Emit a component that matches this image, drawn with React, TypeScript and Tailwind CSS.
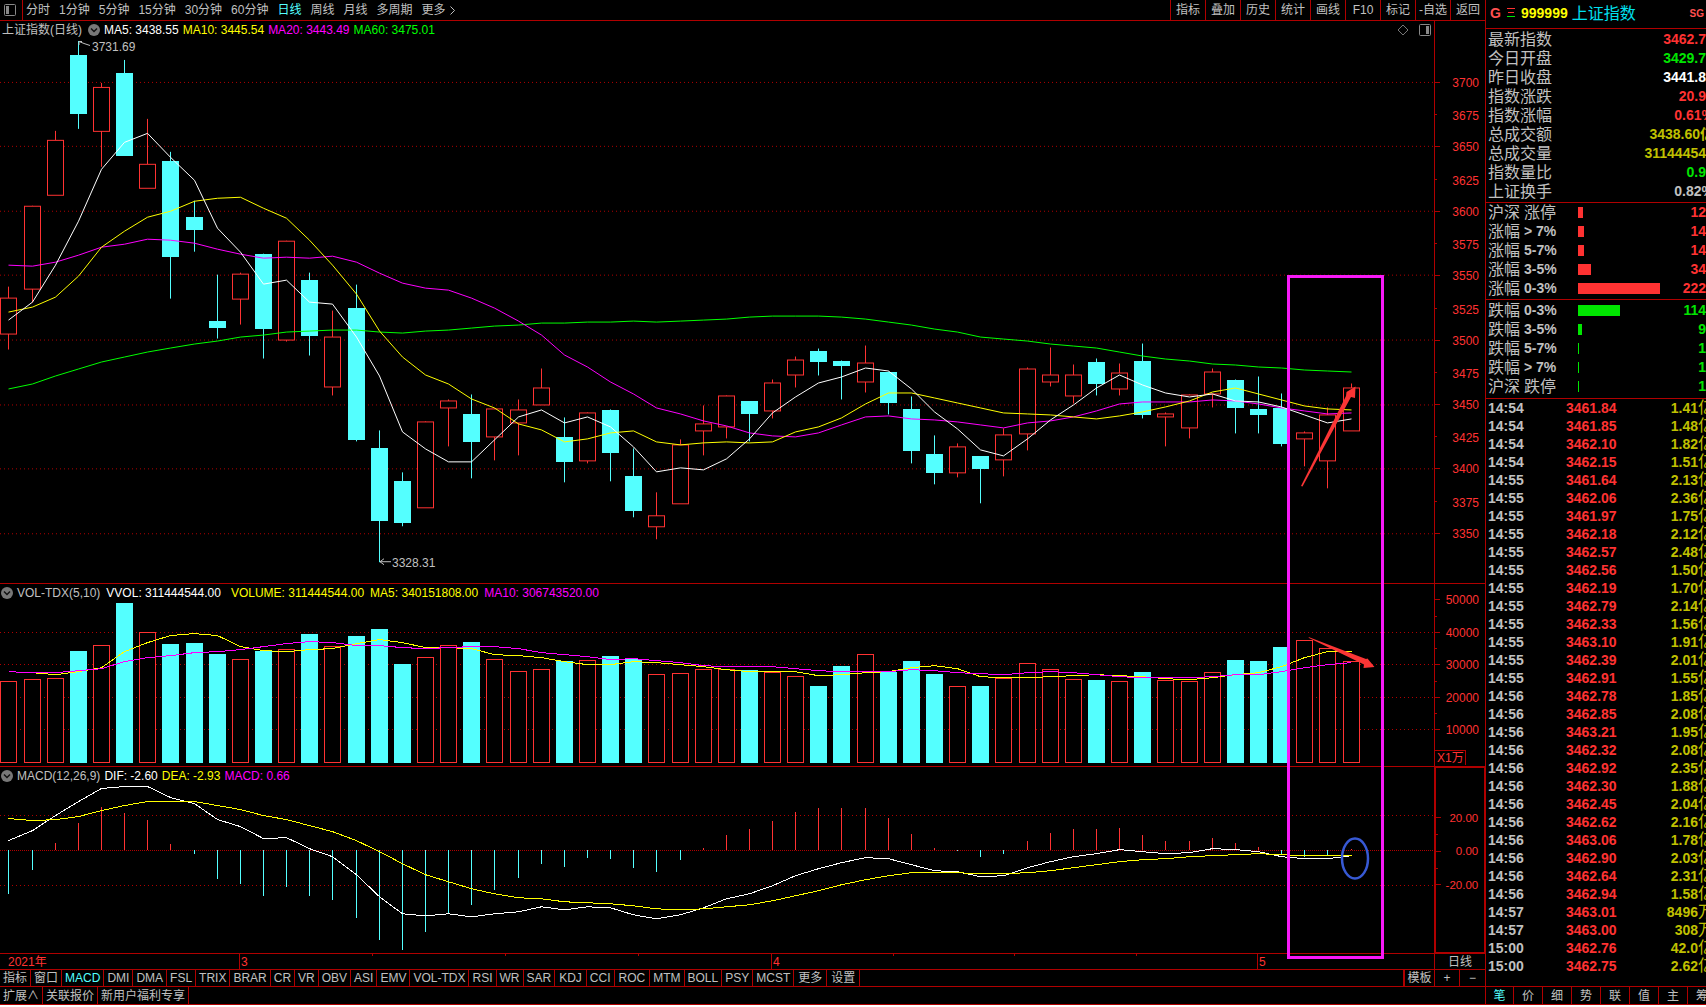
import { clsx } from "clsx";
import type { ReactNode } from "react";

type Candle = [up: 0 | 1, top: number, bottom: number, high: number, low: number];

const RED = "#ff3232";
const CYAN = "#54ffff";
const LINE = "#b00000";

// 1 = 阳线, 0 = 阴线; chart coordinates
const CANDLES: Candle[] = [
  [1, 298, 334, 287, 350], [1, 206, 289, 206, 303], [1, 140, 195, 131, 195], [0, 55, 114, 41, 129],
  [1, 87, 131, 83, 167], [0, 73, 156, 60, 156], [1, 164, 188, 119, 188], [0, 161, 257, 152, 299],
  [0, 217, 230, 201, 252], [0, 321, 328, 275, 339], [1, 274, 299, 273, 325], [0, 254, 329, 254, 359],
  [1, 241, 340, 241, 342], [0, 280, 336, 273, 356], [1, 337, 387, 311, 396], [0, 308, 441, 285, 442],
  [0, 449, 522, 431, 563], [0, 482, 524, 473, 527], [1, 422, 508, 422, 508], [1, 401, 408, 400, 447],
  [0, 415, 443, 395, 479], [1, 409, 437, 409, 461], [1, 410, 423, 400, 456], [1, 388, 405, 369, 405],
  [0, 438, 463, 418, 483], [1, 413, 461, 413, 464], [0, 411, 454, 410, 482], [0, 477, 512, 449, 518],
  [1, 516, 527, 493, 540], [1, 445, 504, 440, 504], [1, 424, 431, 406, 456], [1, 396, 427, 396, 439],
  [0, 402, 415, 402, 442], [1, 383, 411, 380, 419], [1, 360, 375, 357, 388], [0, 351, 362, 349, 376],
  [0, 361, 366, 361, 400], [1, 363, 382, 346, 393], [0, 372, 404, 372, 415], [0, 410, 452, 397, 464],
  [0, 455, 474, 436, 485], [1, 447, 473, 444, 478], [0, 457, 470, 457, 504], [1, 435, 460, 429, 477],
  [1, 369, 434, 368, 451], [1, 375, 382, 348, 387], [1, 375, 396, 365, 404], [0, 362, 385, 359, 396],
  [1, 373, 389, 364, 396], [0, 361, 416, 344, 419], [1, 414, 417, 413, 447], [1, 395, 428, 395, 439],
  [1, 372, 394, 369, 408], [0, 381, 409, 380, 434], [0, 410, 416, 377, 434], [0, 409, 445, 394, 447],
  [1, 433, 439, 432, 467], [1, 415, 461, 408, 489], [1, 388, 431, 384, 431],
];

const MA5 = [320, 302, 265, 221, 169, 142, 133, 157, 180, 228, 252, 284, 280, 302, 304, 337, 376, 432, 449, 462, 462, 440, 417, 410, 423, 417, 427, 447, 472, 468, 470, 459, 439, 413, 397, 383, 377, 368, 371, 389, 412, 429, 450, 456, 439, 420, 405, 388, 375, 385, 393, 397, 394, 401, 402, 407, 415, 423, 419];
const MA10 = [312, 307, 297, 276, 247, 231, 217, 211, 201, 198, 197, 208, 218, 240, 265, 294, 331, 357, 375, 384, 399, 408, 424, 430, 442, 439, 433, 431, 442, 445, 443, 442, 443, 442, 432, 427, 418, 404, 393, 393, 398, 403, 408, 413, 414, 415, 417, 419, 416, 412, 407, 401, 392, 388, 394, 400, 406, 409, 410];
const MA20 = [265, 266, 262, 255, 247, 244, 239, 240, 243, 249, 254, 258, 257, 258, 256, 262, 273, 283, 288, 290, 298, 308, 321, 335, 355, 367, 382, 394, 408, 414, 421, 426, 433, 436, 437, 433, 425, 417, 416, 419, 420, 422, 425, 428, 423, 421, 417, 411, 404, 402, 402, 402, 400, 401, 404, 408, 411, 414, 413];
const MA60 = [389, 384, 376, 369, 362, 357, 352, 348, 344, 341, 337, 335, 332, 331, 330, 330, 332, 333, 331, 330, 328, 326, 325, 323, 323, 322, 322, 321, 322, 321, 320, 319, 317, 316, 316, 316, 317, 319, 322, 325, 329, 332, 337, 339, 341, 344, 346, 348, 352, 356, 359, 361, 364, 365, 367, 368, 370, 371, 372];

const VOLUME = [682, 680, 679, 652, 646, 604, 633, 645, 644, 655, 660, 652, 650, 635, 647, 637, 630, 665, 658, 646, 643, 660, 672, 670, 662, 661, 657, 660, 675, 674, 670, 670, 671, 673, 677, 687, 667, 655, 673, 662, 675, 687, 687, 679, 664, 670, 680, 681, 682, 673, 681, 682, 673, 661, 662, 648, 641, 649, 662];
const VOL_MA5 = [672, 673, 675, 672, 668, 652, 643, 636, 634, 636, 647, 651, 652, 650, 649, 644, 640, 643, 648, 648, 649, 655, 656, 658, 662, 665, 665, 662, 663, 665, 667, 670, 672, 672, 672, 676, 675, 673, 672, 668, 666, 669, 677, 678, 678, 677, 676, 675, 676, 677, 679, 680, 678, 675, 673, 667, 658, 652, 652];
const VOL_MA10 = [672, 673, 673, 671, 669, 662, 658, 656, 653, 652, 650, 647, 644, 642, 643, 646, 646, 648, 649, 648, 647, 647, 649, 653, 655, 657, 660, 659, 661, 663, 666, 667, 667, 667, 669, 671, 672, 672, 672, 670, 671, 673, 674, 675, 673, 672, 673, 675, 677, 678, 678, 678, 677, 675, 675, 672, 668, 665, 663];

const DIF = [840, 830, 815, 801, 788, 786, 786, 797, 803, 819, 826, 838, 837, 848, 856, 874, 896, 913, 915, 913, 916, 913, 911, 906, 909, 906, 907, 914, 918, 914, 907, 898, 893, 885, 875, 868, 862, 857, 858, 864, 870, 871, 876, 875, 867, 861, 856, 853, 849, 851, 853, 852, 848, 849, 851, 856, 858, 858, 855];
const DEA = [818, 820, 819, 816, 810, 805, 801, 801, 801, 805, 809, 815, 819, 825, 831, 840, 851, 863, 874, 881, 888, 893, 897, 898, 901, 902, 903, 905, 908, 909, 908, 906, 904, 900, 895, 890, 884, 879, 875, 872, 872, 872, 873, 873, 872, 870, 867, 864, 861, 859, 858, 856, 855, 854, 853, 854, 855, 855, 855];
const HIST = [894, 870, 843, 823, 807, 813, 820, 844, 854, 879, 884, 896, 887, 896, 900, 918, 940, 950, 932, 913, 905, 890, 878, 864, 867, 858, 859, 868, 872, 860, 848, 835, 829, 821, 812, 808, 808, 808, 818, 834, 848, 851, 857, 854, 841, 833, 829, 829, 828, 835, 841, 841, 838, 843, 847, 854, 857, 855, 849];

const PERIODS = ["分时", "1分钟", "5分钟", "15分钟", "30分钟", "60分钟", "日线", "周线", "月线", "多周期", "更多"];
const TOOLS = ["指标", "叠加", "历史", "统计", "画线", "F10", "标记", "-自选", "返回"];
const INDICATORS = ["指标", "窗口", "MACD", "DMI", "DMA", "FSL", "TRIX", "BRAR", "CR", "VR", "OBV", "ASI", "EMV", "VOL-TDX", "RSI", "WR", "SAR", "KDJ", "CCI", "ROC", "MTM", "BOLL", "PSY", "MCST", "更多", "设置"];
const ROOMY_TABS = ["KDJ", "ROC", "更多", "设置"];
const LINKS = ["扩展∧", "关联报价", "新用户福利专享"];
const SIDE_TABS = ["笔", "价", "细", "势", "联", "值", "主", "筹"];

const QUOTES = [
  { label: "最新指数", value: "3462.7", color: "text-[#ff3232]" },
  { label: "今日开盘", value: "3429.7", color: "text-[#00e600]" },
  { label: "昨日收盘", value: "3441.8", color: "text-white" },
  { label: "指数涨跌", value: "20.9", color: "text-[#ff3232]" },
  { label: "指数涨幅", value: "0.61%", color: "text-[#ff3232]", wide: true },
  { label: "总成交额", value: "3438.60亿", color: "text-[#c0c000]", wide: true },
  { label: "总成交量", value: "31144454", color: "text-[#c0c000]" },
  { label: "指数量比", value: "0.9", color: "text-[#00e600]" },
  { label: "上证换手", value: "0.82%", color: "text-[#c0c0c0]", wide: true },
];

const RISES = [
  { market: "沪深", range: "涨停", bar: 5, count: "12" },
  { market: "涨幅", range: "> 7%", bar: 6, count: "14" },
  { market: "涨幅", range: "5-7%", bar: 6, count: "14" },
  { market: "涨幅", range: "3-5%", bar: 13, count: "34" },
  { market: "涨幅", range: "0-3%", bar: 82, count: "222" },
];

const FALLS = [
  { market: "跌幅", range: "0-3%", bar: 42, count: "114" },
  { market: "跌幅", range: "3-5%", bar: 4, count: "9" },
  { market: "跌幅", range: "5-7%", bar: 1, count: "1" },
  { market: "跌幅", range: "> 7%", bar: 1, count: "1" },
  { market: "沪深", range: "跌停", bar: 1, count: "1" },
];

const TICKS = [
  ["14:54", "3461.84", "1.41亿"], ["14:54", "3461.85", "1.48亿"], ["14:54", "3462.10", "1.82亿"],
  ["14:54", "3462.15", "1.51亿"], ["14:55", "3461.64", "2.13亿"], ["14:55", "3462.06", "2.36亿"],
  ["14:55", "3461.97", "1.75亿"], ["14:55", "3462.18", "2.12亿"], ["14:55", "3462.57", "2.48亿"],
  ["14:55", "3462.56", "1.50亿"], ["14:55", "3462.19", "1.70亿"], ["14:55", "3462.79", "2.14亿"],
  ["14:55", "3462.33", "1.56亿"], ["14:55", "3463.10", "1.91亿"], ["14:55", "3462.39", "2.01亿"],
  ["14:55", "3462.91", "1.55亿"], ["14:56", "3462.78", "1.85亿"], ["14:56", "3462.85", "2.08亿"],
  ["14:56", "3463.21", "1.95亿"], ["14:56", "3462.32", "2.08亿"], ["14:56", "3462.92", "2.35亿"],
  ["14:56", "3462.30", "1.88亿"], ["14:56", "3462.45", "2.04亿"], ["14:56", "3462.62", "2.16亿"],
  ["14:56", "3463.06", "1.78亿"], ["14:56", "3462.90", "2.03亿"], ["14:56", "3462.64", "2.31亿"],
  ["14:56", "3462.94", "1.58亿"], ["14:57", "3463.01", "8496万"], ["14:57", "3463.00", "308万"],
  ["15:00", "3462.76", "42.0亿"], ["15:00", "3462.75", "2.62亿"],
];

const xAt = (i: number) => Math.round(8.45 + i * 23.14);

function Curve({ data, color }: { data: number[]; color: string }) {
  const points = data.map((y, i) => `${xAt(i) + 0.5},${y + 0.5}`).join(" ");
  return <polyline points={points} fill="none" stroke={color} />;
}

function Grid({ rows }: { rows: number[] }) {
  return (
    <>
      {rows.map((y) => (
        <line key={y} x1={0} x2={1434} y1={y + 0.5} y2={y + 0.5} stroke={LINE} strokeDasharray="1 3" />
      ))}
    </>
  );
}

function Bar({ i, up, top, bottom }: { i: number; up: boolean; top: number; bottom: number }) {
  const x = xAt(i) - 8;
  return up ? (
    <rect x={x + 0.5} y={top + 0.5} width={16} height={bottom - top} fill="#000" stroke={RED} />
  ) : (
    <rect x={x} y={top} width={17} height={bottom - top} fill={CYAN} />
  );
}

function Plot({ top, height, children }: { top: number; height: number; children: ReactNode }) {
  return (
    <svg
      className="block min-h-0 w-full flex-1"
      viewBox={`0 ${top} 1434 ${height}`}
      preserveAspectRatio="none"
      shapeRendering="crispEdges"
    >
      {children}
    </svg>
  );
}

type AxisLabel = [y: number, text: string];

function Axis({ top, height, labels, major, minor, children }: {
  top: number;
  height: number;
  labels: AxisLabel[];
  major: number[];
  minor: number[];
  children?: ReactNode;
}) {
  return (
    <svg className="block h-full w-full" viewBox={`1435 ${top} 50 ${height}`}>
      <g stroke={LINE} shapeRendering="crispEdges">
        {major.map((y) => <line key={y} x1={1435} x2={1440} y1={y + 0.5} y2={y + 0.5} />)}
        {minor.map((y) => <line key={y} x1={1435} x2={1437} y1={y + 0.5} y2={y + 0.5} />)}
      </g>
      <g fill={RED} fontSize={12} textAnchor="end">
        {labels.map(([y, text]) => <text key={text} x={1479} y={y + 5}>{text}</text>)}
      </g>
      {children}
    </svg>
  );
}

function FoldButton({ label }: { label: string }) {
  return (
    <button type="button" aria-label={label} className="shrink-0">
      <svg width="12" height="12" viewBox="0 0 12 12" className="block">
        <circle cx="6" cy="6" r="6" fill="#787878" />
        <path d="M3 4.5 6 7.5 9 4.5" fill="none" stroke="#111" strokeWidth="1.5" />
      </svg>
    </button>
  );
}

function PricePanel() {
  return (
    <section className="flex min-h-0 flex-[564_1_0%] border-b border-[#b00000]">
      <div className="flex min-w-0 flex-1 flex-col">
        <header className="flex h-[18px] items-center gap-1 pl-0.5 whitespace-nowrap">
          <h1 className="pr-0.5">上证指数(日线)</h1>
          <FoldButton label="收起" />
          <span className="text-white">MA5: 3438.55</span>
          <span className="text-[#ffff00]">MA10: 3445.54</span>
          <span className="text-[#ff00ff]">MA20: 3443.49</span>
          <span className="text-[#00ff00]">MA60: 3475.01</span>
          <svg width="12" height="12" viewBox="0 0 12 12" className="mr-1.5 ml-auto">
            <path d="M6 1 11 6 6 11 1 6Z" fill="none" stroke="#777" />
          </svg>
          <svg width="12" height="12" viewBox="0 0 12 12" className="mr-[3px]">
            <rect x="0.5" y="0.5" width="11" height="11" rx="1" fill="none" stroke="#888" />
            <rect x="7" y="2" width="3" height="8" fill="#888" />
          </svg>
        </header>
        <Plot top={39} height={545}>
          <Grid rows={[82, 146, 211, 275, 340, 405, 469, 534]} />
          {CANDLES.map(([up, top, bottom, high, low], i) => (
            <g key={i}>
              <line x1={xAt(i) + 0.5} x2={xAt(i) + 0.5} y1={high} y2={low} stroke={up ? RED : CYAN} />
              <Bar i={i} up={up === 1} top={top} bottom={bottom} />
            </g>
          ))}
          <Curve data={MA60} color="#00ff00" />
          <Curve data={MA20} color="#ff00ff" />
          <Curve data={MA10} color="#ffff00" />
          <Curve data={MA5} color="#ffffff" />
          <g fill="none" stroke="#c0c0c0">
            <path d="M79 41.5 L84 43.5 L90 45.5 M79 45 V41.5 H82" />
            <path d="M380 562.5 H391 M384 559.5 L380 562.5 L384 565.5" />
          </g>
          <g fill="#c0c0c0" fontSize={12} shapeRendering="auto">
            <text x={92} y={51}>3731.69</text>
            <text x={392} y={568}>3328.31</text>
          </g>
        </Plot>
      </div>
      <div className="w-[51px] border-l border-[#b00000]">
        <Axis
          top={21}
          height={563}
          major={[82, 146, 211, 275, 340, 405, 469, 534]}
          minor={[114, 179, 243, 308, 373, 437, 502]}
          labels={[
            [82, "3700"], [115, "3675"], [146, "3650"], [180, "3625"], [211, "3600"],
            [244, "3575"], [275, "3550"], [309, "3525"], [340, "3500"], [374, "3475"],
            [405, "3450"], [438, "3425"], [469, "3400"], [503, "3375"], [534, "3350"],
          ]}
        />
      </div>
    </section>
  );
}

function VolumePanel() {
  return (
    <section className="flex min-h-0 flex-[182_1_0%] border-b border-[#b00000]">
      <div className="flex min-w-0 flex-1 flex-col">
        <header className="flex h-[18px] items-center gap-1.5 pl-px whitespace-nowrap">
          <FoldButton label="收起" />
          <h2 className="-ml-0.5">VOL-TDX(5,10)</h2>
          <span className="text-white">VVOL: 311444544.00</span>
          <span className="pl-1 text-[#ffff00]">VOLUME: 311444544.00</span>
          <span className="text-[#ffff00]">MA5: 340151808.00</span>
          <span className="text-[#ff00ff]">MA10: 306743520.00</span>
        </header>
        <Plot top={603} height={163}>
          <Grid rows={[633, 665, 698, 730]} />
          {VOLUME.map((top, i) => {
            const up = CANDLES[i][0] === 1;
            return <Bar key={i} i={i} up={up} top={top} bottom={up ? 763 : 764} />;
          })}
          <Curve data={VOL_MA5} color="#ffff00" />
          <Curve data={VOL_MA10} color="#ff00ff" />
        </Plot>
      </div>
      <div className="w-[51px] border-l border-[#b00000]">
        <Axis
          top={585}
          height={181}
          major={[600, 633, 665, 698, 730]}
          minor={[617, 649, 682, 714]}
          labels={[[600, "50000"], [633, "40000"], [665, "30000"], [698, "20000"], [730, "10000"]]}
        >
          <path d="M1435 751.5 H1465.5 V766" fill="none" stroke={LINE} shapeRendering="crispEdges" />
          <text x={1437} y={763} fill={RED} fontSize={12}>X1万</text>
        </Axis>
      </div>
    </section>
  );
}

function MacdPanel() {
  return (
    <section className="flex min-h-0 flex-[187_1_0%] border-b border-[#b00000]">
      <div className="flex min-w-0 flex-1 flex-col">
        <header className="flex h-[18px] items-center gap-1 pl-px whitespace-nowrap">
          <FoldButton label="收起" />
          <h2>MACD(12,26,9)</h2>
          <span className="text-white">DIF: -2.60</span>
          <span className="text-[#ffff00]">DEA: -2.93</span>
          <span className="text-[#ff00ff]">MACD: 0.66</span>
        </header>
        <Plot top={785} height={168}>
          <Grid rows={[815, 885]} />
          <line x1={0} x2={1434} y1={850.5} y2={850.5} stroke={LINE} strokeDasharray="1 1" />
          {HIST.map((y, i) => (
            <line key={i} x1={xAt(i) + 0.5} x2={xAt(i) + 0.5} y1={850} y2={y} stroke={y < 850 ? RED : CYAN} />
          ))}
          <Curve data={DIF} color="#ffffff" />
          <Curve data={DEA} color="#ffff00" />
        </Plot>
      </div>
      <div className="w-[51px] border border-l-2 border-[#b00000]">
        <Axis
          top={768}
          height={184}
          major={[815, 850, 885]}
          minor={[833, 868]}
          labels={[[815, "20.00"], [850, "0.00"], [885, "-20.00"]]}
        />
      </div>
    </section>
  );
}

function TimeAxis() {
  return (
    <div className="flex h-4 shrink-0 border-b border-[#b00000]">
      <svg className="block h-full min-w-0 flex-1" viewBox="0 954 1434 15" preserveAspectRatio="none">
        <g stroke={LINE} shapeRendering="crispEdges">
          {[239, 771, 1257].map((x) => <line key={x} x1={x + 0.5} x2={x + 0.5} y1={954} y2={969} />)}
          {[372, 505, 638, 893, 1014, 1136].map((x) => <line key={x} x1={x + 0.5} x2={x + 0.5} y1={954} y2={956} />)}
        </g>
        <g fill={RED} fontSize={12}>
          <text x={8} y={966}>2021年</text>
          <text x={241} y={966}>3</text>
          <text x={773} y={966}>4</text>
          <text x={1259} y={966}>5</text>
        </g>
      </svg>
      <div className="flex w-[51px] items-center justify-center border-l border-[#b00000]">日线</div>
    </div>
  );
}

function Annotations() {
  return (
    <svg
      className="pointer-events-none absolute inset-0 h-full w-full"
      viewBox="0 21 1485 949"
      preserveAspectRatio="none"
    >
      <rect x={1288.5} y={276.5} width={94} height={681} fill="none" stroke="#f81af8" strokeWidth={3} />
      <path d="M1301 486 L1346 396 L1346.5 392 L1355.5 386.5 L1355 398 L1351 397 L1302.5 486.5Z" fill="#fa3535" />
      <path d="M1308.5 637 L1366 659 L1367.5 658.5 L1374.5 667 L1363.5 668 L1364 664.5 L1309 638Z" fill="#fa3535" />
      <ellipse cx={1355} cy={858.5} rx={13} ry={20} fill="none" stroke="#3759d4" strokeWidth={2.5} />
    </svg>
  );
}

function TopBar() {
  return (
    <nav className="flex h-[21px] shrink-0 items-stretch border-b border-[#b00000]">
      <button type="button" aria-label="侧栏" className="flex w-[23px] items-center border-r border-[#b00000] pl-1">
        <svg width="12" height="12" viewBox="0 0 12 12">
          <rect x="0.5" y="0.5" width="11" height="11" rx="1" fill="none" stroke="#888" />
          <rect x="2" y="2" width="3" height="8" fill="#888" />
        </svg>
      </button>
      <div className="flex flex-1 items-center gap-[9px] pl-[3px] whitespace-nowrap">
        {PERIODS.map((name) => (
          <button key={name} type="button" className={clsx("flex items-center gap-1", name === "日线" && "text-[#54ffff]")}>
            {name}
            {name === "更多" && (
              <svg width="5" height="9" viewBox="0 0 5 9">
                <path d="M0.5 0.5 4.5 4.5 0.5 8.5" fill="none" stroke="currentColor" />
              </svg>
            )}
          </button>
        ))}
      </div>
      {TOOLS.map((name) => (
        <button key={name} type="button" className="w-[35px] border-l border-[#b00000] whitespace-nowrap">
          {name}
        </button>
      ))}
    </nav>
  );
}

function BottomBars() {
  return (
    <>
      <nav className="flex h-[17px] shrink-0 border-b border-[#b00000]">
        {INDICATORS.map((name, i) => (
          <button
            key={i}
            type="button"
            className={clsx(
              "border-r border-[#b00000] whitespace-nowrap",
              ROOMY_TABS.includes(name) ? "px-1" : "px-[3px]",
              name === "MACD" && "text-[#54ffff]",
            )}
          >
            {name}
          </button>
        ))}
        <button type="button" className="ml-auto w-[31px] border-l-2 border-[#b00000]">模板</button>
        <button type="button" className="w-[25px] border-l border-[#b00000]">+</button>
        <button type="button" className="w-[26px] border-l border-[#b00000]">−</button>
      </nav>
      <nav className="flex h-[18px] shrink-0 border-b border-[#b00000]">
        {LINKS.map((name) => (
          <button key={name} type="button" className="border-r border-[#b00000] px-[3px] whitespace-nowrap">
            {name}
          </button>
        ))}
      </nav>
    </>
  );
}

function RangeRow({ row, up }: { row: (typeof RISES)[number]; up: boolean }) {
  return (
    <li className="flex h-[19px] items-center pr-2">
      <span className="w-9 text-base/[19px]">{row.market}</span>
      <span className={clsx("w-[54px]", row.range.includes("停") ? "text-base/[19px]" : "font-bold")}>{row.range}</span>
      <span className={clsx("h-[11px]", up ? "bg-[#ff3232]" : "bg-[#00e600]")} style={{ width: row.bar }} />
      <span className={clsx("ml-auto font-bold", up ? "text-[#ff3232]" : "text-[#00e600]")}>{row.count}</span>
    </li>
  );
}

function Sidebar() {
  return (
    <aside className="w-[221px] shrink-0 overflow-hidden border-l border-[#b00000] text-sm/[19px]">
      <div className="flex h-full w-[228px] flex-col">
        <header className="flex h-[29px] shrink-0 items-center border-b border-[#b00000] pb-0.5 pl-1 whitespace-nowrap">
          <span className="w-4 font-bold text-[#ff5050]">G</span>
          <svg width="8" height="10" viewBox="0 0 8 10" shapeRendering="crispEdges" className="mr-1.5 ml-px">
            <path d="M0 0.5H8M1 4.5H7" stroke="#ff3232" />
            <path d="M0 8.5H8" stroke="#00e600" />
          </svg>
          <span className="mr-1 font-bold text-[#ffff00]">999999</span>
          <span className="text-base/[19px] text-[#00e0f0]">上证指数</span>
          <span className="mr-2.5 ml-auto text-[10px] font-bold text-[#ff5050]">SG</span>
        </header>
        <dl className="border-b border-[#b00000] py-px pl-0.5">
          {QUOTES.map((q) => (
            <div key={q.label} className={clsx("flex h-[19px] items-center justify-between", !q.wide && "pr-2")}>
              <dt className="text-base/[19px]">{q.label}</dt>
              <dd className={clsx("font-bold", q.color)}>{q.value}</dd>
            </div>
          ))}
        </dl>
        <ul className="border-b border-[#b00000] pb-px pl-0.5">
          {RISES.map((row) => <RangeRow key={row.range} row={row} up />)}
        </ul>
        <ul className="border-b border-[#b00000] pt-px pb-0.5 pl-0.5">
          {FALLS.map((row) => <RangeRow key={row.range} row={row} up={false} />)}
        </ul>
        <table className="w-full table-fixed font-bold">
          <tbody>
            {TICKS.map(([time, price, amount], i) => (
              <tr key={i} className="h-[18px] leading-[18px]">
                <td className="w-20 p-0 pl-0.5">{time}</td>
                <td className="w-16 p-0 text-[#ff3232]">{price}</td>
                <td className="p-0 text-right text-[#c0c000]">
                  {amount.slice(0, -1)}
                  <span className="text-base/[18px] font-normal">{amount.slice(-1)}</span>
                </td>
              </tr>
            ))}
          </tbody>
        </table>
        <nav className="mt-auto flex h-[19px] shrink-0 border-y border-[#b00000] text-xs">
          {SIDE_TABS.map((name, i) => (
            <button
              key={name}
              type="button"
              className={clsx("shrink-0 border-r border-[#b00000]", i === 0 ? "w-7 text-[#54ffff]" : "w-[29px]")}
            >
              {name}
            </button>
          ))}
        </nav>
      </div>
    </aside>
  );
}

export default function App() {
  return (
    <div className="h-screen overflow-hidden bg-white pb-0.5 font-['Liberation_Sans','Noto_Sans_CJK_SC',sans-serif] text-xs text-[#c0c0c0]">
      <div className="flex h-full bg-black">
        <main className="flex min-w-0 flex-1 flex-col">
          <TopBar />
          <div className="relative flex min-h-0 flex-1 flex-col">
            <PricePanel />
            <VolumePanel />
            <MacdPanel />
            <TimeAxis />
            <Annotations />
          </div>
          <BottomBars />
        </main>
        <Sidebar />
      </div>
    </div>
  );
}
